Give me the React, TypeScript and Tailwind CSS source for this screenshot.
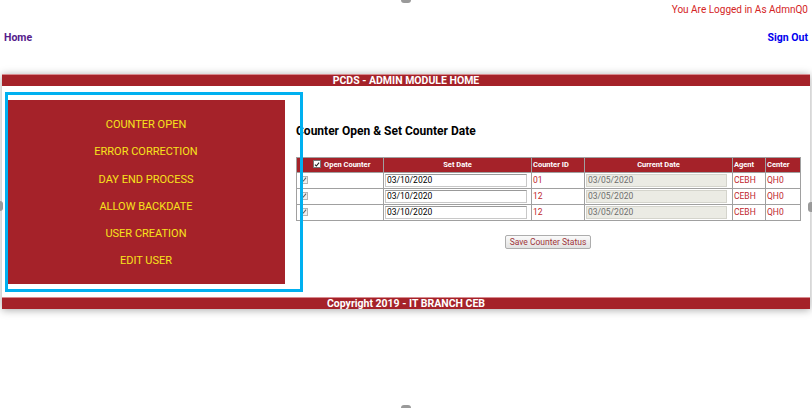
const menu = ['COUNTER OPEN', 'ERROR CORRECTION', 'DAY END PROCESS', 'ALLOW BACKDATE', 'USER CREATION', 'EDIT USER'];

const rows = [
  { setDate: '03/10/2020', id: '01', current: '03/05/2020', agent: 'CEBH', center: 'QH0' },
  { setDate: '03/10/2020', id: '12', current: '03/05/2020', agent: 'CEBH', center: 'QH0' },
  { setDate: '03/10/2020', id: '12', current: '03/05/2020', agent: 'CEBH', center: 'QH0' },
];

const font = { fontFamily: 'Roboto, "Liberation Sans", Arial, sans-serif' };

const Check = ({ dim }: { dim?: boolean }) => (
  <span className={`inline-flex items-center justify-center w-[8px] h-[8px] border ${dim ? 'border-[#b5b5b5] bg-[#eee]' : 'border-[#777] bg-white'}`}>
    <svg viewBox="0 0 8 8" className="w-[7px] h-[7px]">
      <path d="M1.2 4.2 L3.1 6 L6.8 1.6" fill="none" stroke={dim ? '#666' : '#222'} strokeWidth="1.5" />
    </svg>
  </span>
);

const App = () => {
  return (
    <div className="relative w-[812px] h-[408px] bg-white overflow-hidden" style={font}>
      <div className="flex justify-end pr-[4px] pt-[3px] h-[16px] text-[10px] leading-[14px] text-[#d42424]">
        You Are Logged in As AdmnQ0
      </div>
      <div className="flex justify-between px-[4px] mt-[15px] text-[10.5px] leading-[14px] font-bold">
        <span className="text-[#551a8b]">Home</span>
        <span className="text-[#0000ee]">Sign Out</span>
      </div>

      <div className="mx-[2px] mt-[29px] w-[808px] shadow-[0_1px_8px_rgba(0,0,0,0.35)]">
        <div className="h-[12px] bg-[#a52229] border-t border-[#d88a8e] text-center text-white font-bold text-[10.5px] leading-[11px]">
          PCDS - ADMIN MODULE HOME
        </div>

        <div className="flex h-[211px] bg-white">
          <div className="ml-[5px] mt-[14px] w-[278px] h-[184px] bg-[#a52229] pt-[11px] pb-[9px] flex flex-col">
            {menu.map((m) => (
              <div key={m} className="h-[27.3px] leading-[27px] text-center text-[11px] text-[#f7e31c]">
                {m}
              </div>
            ))}
          </div>

          <div className="ml-[11px] w-[504px] flex flex-col">
            <h2 className="mt-[37px] text-[12px] leading-[16px] font-bold text-black">Counter Open &amp; Set Counter Date</h2>

            <table className="mt-[18px] w-[504px] border-collapse table-fixed text-[8.5px]">
              <colgroup>
                <col className="w-[87px]" />
                <col className="w-[148px]" />
                <col className="w-[53px]" />
                <col className="w-[148px]" />
                <col className="w-[33px]" />
                <col className="w-[35px]" />
              </colgroup>
              <thead>
                <tr className="h-[14px] bg-[#a52229] text-white text-[7.5px] font-bold">
                  <th className="border border-[#a0a0a0] text-left pl-[16px] leading-[12px]">
                    <span className="inline-flex items-center gap-[3px]">
                      <Check />
                      <span className="relative top-[1px]">Open Counter</span>
                    </span>
                  </th>
                  <th className="border border-[#a0a0a0] leading-[12px]">Set Date</th>
                  <th className="border border-[#a0a0a0] text-left pl-[1px] leading-[12px]">Counter ID</th>
                  <th className="border border-[#a0a0a0] leading-[12px]">Current Date</th>
                  <th className="border border-[#a0a0a0] text-left pl-[1px] leading-[12px]">Agent</th>
                  <th className="border border-[#a0a0a0] text-left pl-[1px] leading-[12px]">Center</th>
                </tr>
              </thead>
              <tbody>
                {rows.map((r, i) => (
                  <tr key={i} className="h-[16px] text-[#c0272d]">
                    <td className="border border-[#a0a0a0] pl-[3px] leading-[10px]">
                      <Check dim />
                    </td>
                    <td className="border border-[#a0a0a0] px-[1px]">
                      <div className="w-[142px] h-[13px] border border-[#c8c8c8] border-t-[#999] bg-white text-black leading-[11px] pl-[1px]">
                        {r.setDate}
                      </div>
                    </td>
                    <td className="border border-[#a0a0a0] pl-[1px] leading-[14px]">{r.id}</td>
                    <td className="border border-[#a0a0a0] px-[1px]">
                      <div className="w-[141px] h-[13px] border border-[#d4d4cc] bg-[#ebebe4] text-[#6d6d6d] leading-[11px] pl-[1px]">
                        {r.current}
                      </div>
                    </td>
                    <td className="border border-[#a0a0a0] pl-[1px] leading-[14px]">{r.agent}</td>
                    <td className="border border-[#a0a0a0] pl-[1px] leading-[14px]">{r.center}</td>
                  </tr>
                ))}
              </tbody>
            </table>

            <div className="mt-[14px] flex justify-center">
              <button className="h-[14px] px-[4px] border border-[#adadad] rounded-[2px] bg-gradient-to-b from-[#fafafa] to-[#e2e2e2] text-[8.5px] leading-[12px] text-[#a0353a]">
                Save Counter Status
              </button>
            </div>
          </div>
        </div>

        <div className="h-[12px] bg-[#a52229] border-t border-[#d88a8e] text-center text-white font-bold text-[10.5px] leading-[11px]">
          Copyright 2019 - IT BRANCH CEB
        </div>
      </div>

      {/* annotation frame drawn over the menu */}
      <div className="absolute left-[5px] top-[92px] w-[298px] h-[200px] border-[3px] border-[#00b0f0]" />

      {/* window resize handles at the edges */}
      <div className="absolute left-[401px] top-[-3px] w-[10px] h-[6px] rounded-full bg-[#9a9a9a]" />
      <div className="absolute left-[401px] bottom-[-3px] w-[10px] h-[6px] rounded-full bg-[#9a9a9a]" />
      <div className="absolute left-[-3px] top-[201px] w-[6px] h-[10px] rounded-full bg-[#9a9a9a]" />
      <div className="absolute right-[-2px] top-[202px] w-[6px] h-[10px] rounded-full bg-[#9a9a9a]" />
    </div>
  );
};

export default App;
